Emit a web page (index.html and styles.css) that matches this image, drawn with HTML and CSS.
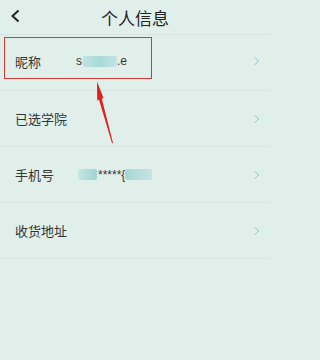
FILE: index.html
```html
<!DOCTYPE html>
<html lang="zh">
<head>
<meta charset="utf-8">
<link rel="stylesheet" href="styles.css">
</head>
<body>
<div class="page">
  <header class="header">
    <svg class="back" width="10" height="14" viewBox="0 0 10 14"><path d="M8.5 1.5 L2.5 7 L8.5 12.5" fill="none" stroke="#222" stroke-width="2"/></svg>
    <h1 class="title">个人信息</h1>
  </header>
  <div class="list">
    <div class="row first">
      <span class="label">昵称</span>
      <span class="value">s<span class="blur b1"></span>.e</span>
      <span class="chev"></span>
    </div>
    <div class="row">
      <span class="label">已选学院</span>
      <span class="value"></span>
      <span class="chev"></span>
    </div>
    <div class="row">
      <span class="label">手机号</span>
      <span class="value"><span class="blur b2"></span>*****{<span class="blur b3"></span></span>
      <span class="chev"></span>
    </div>
    <div class="row">
      <span class="label">收货地址</span>
      <span class="value"></span>
      <span class="chev"></span>
    </div>
  </div>
  <div class="mark"></div>
  <svg class="arrow" width="40" height="70" viewBox="0 0 40 70"><path d="M12 1.5 L18.5 18 L16.8 18.8 L28 63 L27 63.3 L14 19.8 L12.2 20.5 Z" fill="#e0201c"/></svg>
</div>
</body>
</html>
```
FILE: styles.css
```css
html, body { margin: 0; padding: 0; }
body {
  width: 270px; height: 360px; overflow: hidden;
  background: #e1efeb;
  font-family: "Noto Sans CJK SC", "Noto Sans", sans-serif;
  color: #333;
}
.page { position: relative; width: 270px; height: 360px; }
.header {
  height: 34px;
  display: flex; align-items: center; justify-content: center;
  border-bottom: 1px solid #d3e5e1;
  position: relative;
}
.back { position: absolute; left: 10px; top: 9px; }
.title { margin: 0; font-size: 17px; font-weight: 400; color: #222; line-height: 1; }
.row {
  height: 55px;
  display: flex; align-items: center;
  padding: 0 10px 0 15px;
  border-bottom: 1px solid #d6e7e3;
}
.row.first { padding-bottom: 3px; height: 52px; }
.label { width: 61px; font-size: 13px; color: #333; }
.value { flex: 1; font-family: "Liberation Sans", Arial, sans-serif; font-size: 12px; color: #333; display: flex; align-items: center; }
.blur { display: inline-block; height: 11px; background: linear-gradient(90deg, #bfe2e1, #a9d9d9, #c4e4e2); border-radius: 2px; }
.b1 { width: 34px; margin: 0 0 0 1px; }
.b2 { width: 19px; margin: 0 1px 0 2px; background: linear-gradient(90deg, #c6e6e3, #9fd3d3); }
.b3 { width: 27px; background: linear-gradient(90deg, #a6d6d6, #c5e5e2); }
.chev {
  width: 5px; height: 5px;
  border-top: 1.5px solid #a9d0d2; border-right: 1.5px solid #a9d0d2;
  transform: rotate(45deg);
  margin-right: 2px;
}
.mark {
  position: absolute; left: 4px; top: 37px;
  width: 146px; height: 40px;
  border: 1.5px solid #d23a35;
}
.arrow { position: absolute; left: 85px; top: 80px; }
```
